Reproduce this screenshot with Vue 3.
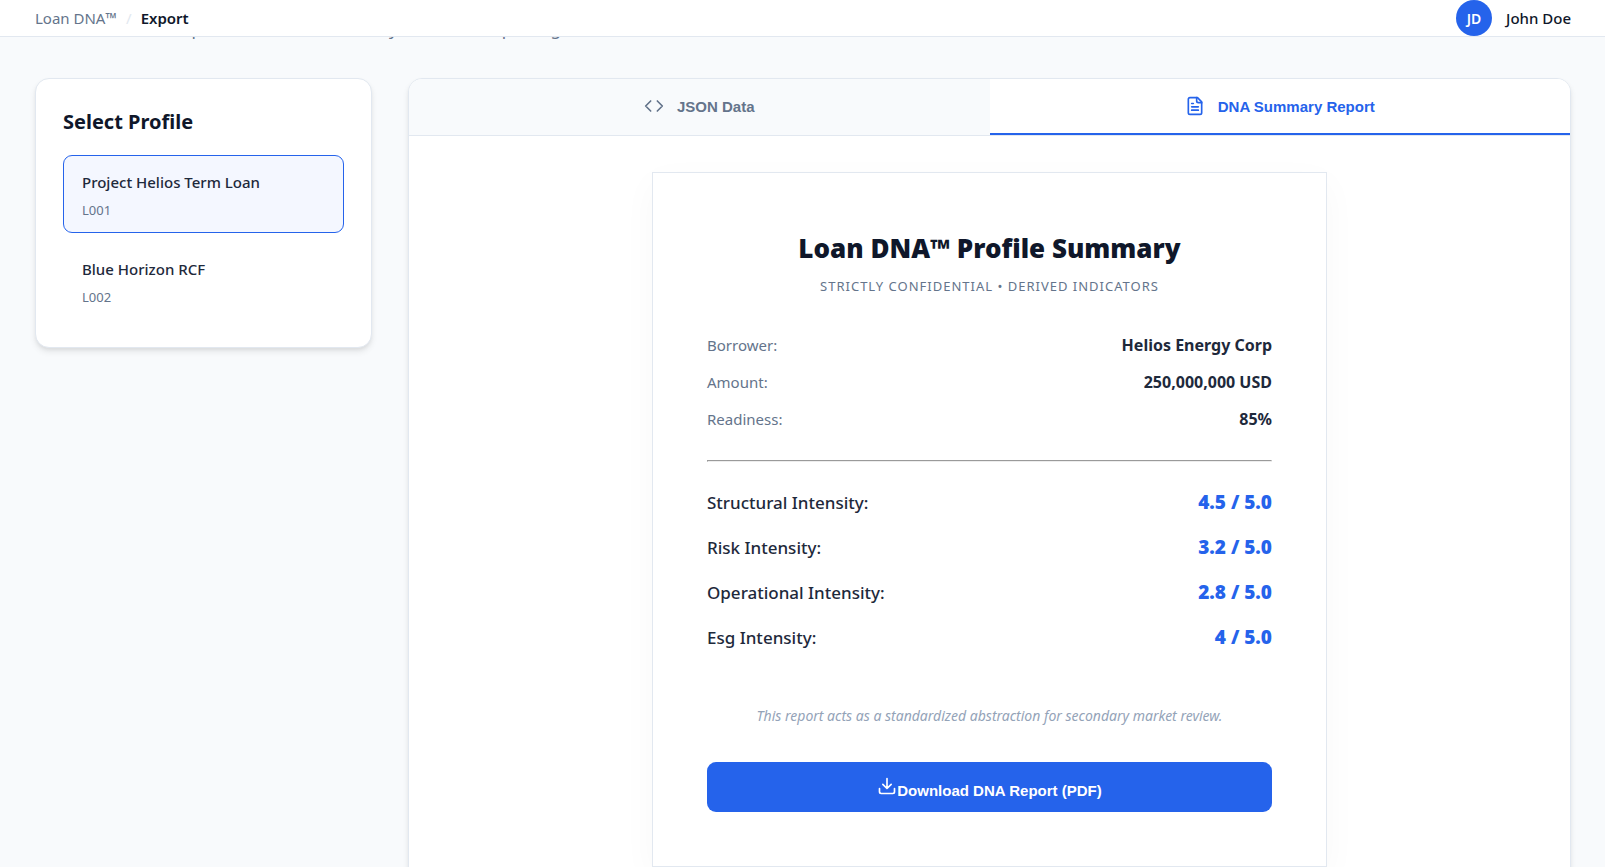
<script setup>
import { ref, computed } from 'vue'

const profiles = [
    {
        id: 'L001',
        name: 'Project Helios Term Loan',
        borrower: 'Helios Energy Corp',
        amount: '250,000,000 USD',
        readiness: 85,
        dna: { structural: '4.5', risk: '3.2', operational: '2.8', esg: '4' }
    },
    {
        id: 'L002',
        name: 'Blue Horizon RCF',
        borrower: 'Blue Horizon Ltd',
        amount: '120,000,000 EUR',
        readiness: 72,
        dna: { structural: '3.8', risk: '2.9', operational: '3.1', esg: '3.5' }
    }
]

const selectedId = ref('L001')
const activeTab = ref('report')

const selected = computed(() => profiles.find(p => p.id === selectedId.value))
const capitalize = (s) => s.charAt(0).toUpperCase() + s.slice(1)
const print = () => window.print()
</script>

<template>
    <div class="page">
        <header class="topbar">
            <nav class="breadcrumb">
                <a href="#">Loan DNA™</a>
                <span class="separator">/</span>
                <span class="current">Export</span>
            </nav>
            <div class="user">
                <span class="avatar">JD</span>
                <span class="user-name">John Doe</span>
            </div>
        </header>

        <main class="content">
            <p class="subtitle">Download the DNA profile data for secondary market or reporting.</p>

            <div class="layout">
                <aside class="card profiles">
                    <h3>Select Profile</h3>
                    <div class="profile-list">
                        <button v-for="p in profiles" :key="p.id" type="button" class="profile"
                            :class="{ active: p.id === selectedId }" @click="selectedId = p.id">
                            <span class="profile-name">{{ p.name }}</span>
                            <span class="profile-id">{{ p.id }}</span>
                        </button>
                    </div>
                </aside>

                <section class="card preview">
                    <div class="tabs">
                        <button type="button" class="tab" :class="{ active: activeTab === 'json' }"
                            @click="activeTab = 'json'">
                            <svg class="icon" viewBox="0 0 24 24">
                                <path d="M16 18l6-6-6-6M8 6l-6 6 6 6" />
                            </svg>
                            JSON Data
                        </button>
                        <button type="button" class="tab" :class="{ active: activeTab === 'report' }"
                            @click="activeTab = 'report'">
                            <svg class="icon" viewBox="0 0 24 24">
                                <path d="M15 2H6a2 2 0 0 0-2 2v16a2 2 0 0 0 2 2h12a2 2 0 0 0 2-2V7z" />
                                <path d="M14 2v4a2 2 0 0 0 2 2h4M10 9H8M16 13H8M16 17H8" />
                            </svg>
                            DNA Summary Report
                        </button>
                    </div>

                    <pre v-if="activeTab === 'json'" class="json">{{ JSON.stringify(selected, null, 2) }}</pre>

                    <div v-else class="report-area">
                        <article class="report">
                            <h2>Loan DNA™ Profile Summary</h2>
                            <p class="confidential">STRICTLY CONFIDENTIAL • DERIVED INDICATORS</p>

                            <div class="facts">
                                <div class="row">
                                    <span>Borrower:</span>
                                    <strong>{{ selected.borrower }}</strong>
                                </div>
                                <div class="row">
                                    <span>Amount:</span>
                                    <strong>{{ selected.amount }}</strong>
                                </div>
                                <div class="row">
                                    <span>Readiness:</span>
                                    <strong>{{ selected.readiness }}%</strong>
                                </div>
                            </div>

                            <hr>

                            <div class="scores">
                                <div v-for="(value, key) in selected.dna" :key="key" class="score">
                                    <span>{{ capitalize(key) }} Intensity:</span>
                                    <strong>{{ value }} / 5.0</strong>
                                </div>
                            </div>

                            <p class="note">This report acts as a standardized abstraction for secondary market review.</p>

                            <button type="button" class="download" @click="print"><svg class="icon" viewBox="0 0 24 24">
                                    <path d="M21 15v4a2 2 0 0 1-2 2H5a2 2 0 0 1-2-2v-4M7 10l5 5 5-5M12 15V3" />
                                </svg>Download DNA Report (PDF)</button>
                        </article>
                    </div>
                </section>
            </div>
        </main>
    </div>
</template>

<style>
body {
    background-color: #f8fafc;
}
</style>

<style scoped>
.page {
    min-height: 100vh;
    font-family: 'Segoe UI', 'Noto Sans', sans-serif;
    font-size: 15px;
    color: #1e293b;
}

.page * {
    box-sizing: border-box;
}

.topbar {
    position: sticky;
    top: 0;
    z-index: 10;
    display: flex;
    justify-content: space-between;
    align-items: center;
    padding: 0 34px 0 35px;
    background-color: white;
    border-bottom: 1px solid #e2e8f0;
}

.breadcrumb {
    display: flex;
    align-items: center;
    gap: 9px;
}

.breadcrumb a {
    color: #64748b;
    text-decoration: none;
}

.separator {
    color: #e2e8f0;
}

.current {
    font-weight: 600;
    color: #0f172a;
}

.user {
    display: flex;
    align-items: center;
    gap: 14px;
}

.avatar {
    display: flex;
    align-items: center;
    justify-content: center;
    width: 36px;
    height: 36px;
    border-radius: 50%;
    background-color: #2563eb;
    color: white;
    font-size: 14px;
    font-weight: 600;
}

.user-name {
    font-weight: 500;
    color: #0f172a;
}

.content {
    padding: 0 34px 36px 35px;
}

.subtitle {
    margin: -21px 0 37px;
    font-size: 17px;
    line-height: 25px;
    color: #64748b;
}

.layout {
    display: grid;
    grid-template-columns: 337px 1fr;
    gap: 36px;
    align-items: start;
}

.card {
    background-color: white;
    border: 1px solid #e2e8f0;
    border-radius: 14px;
    box-shadow: 0 4px 7px -1px rgba(0, 0, 0, 0.1), 0 2px 4px -1px rgba(0, 0, 0, 0.06);
}

.profiles {
    padding: 27px;
}

.profiles h3 {
    margin: 0 0 18px;
    font-size: 20px;
    line-height: 31px;
    font-weight: 700;
    color: #0f172a;
}

.profile-list {
    display: flex;
    flex-direction: column;
    gap: 9px;
}

.profile {
    display: flex;
    flex-direction: column;
    gap: 4px;
    padding: 14px 18px 10px;
    border: 1px solid transparent;
    border-radius: 9px;
    background: none;
    font-family: inherit;
    text-align: left;
    cursor: pointer;
}

.profile.active {
    border-color: #2563eb;
    background-color: #f4f7ff;
}

.profile-name {
    font-size: 15px;
    line-height: 25px;
    font-weight: 500;
    color: #1e293b;
}

.profile-id {
    font-size: 13px;
    line-height: 23px;
    color: #64748b;
}

.preview {
    overflow: hidden;
}

.tabs {
    display: flex;
    background-color: #f8fafc;
    border-bottom: 1px solid #e2e8f0;
}

.tab {
    flex: 1;
    display: flex;
    align-items: center;
    justify-content: center;
    gap: 13px;
    height: 56px;
    padding: 0;
    border: none;
    border-bottom: 2px solid transparent;
    background: none;
    font-family: 'Liberation Sans', Arial, sans-serif;
    font-size: 15px;
    font-weight: 700;
    color: #64748b;
    cursor: pointer;
}

.tab.active {
    background-color: white;
    border-bottom-color: #2563eb;
    color: #2563eb;
}

.icon {
    width: 20px;
    height: 20px;
    fill: none;
    stroke: currentColor;
    stroke-width: 2;
    stroke-linecap: round;
    stroke-linejoin: round;
}

.json {
    margin: 0;
    padding: 36px;
    font-family: 'Liberation Mono', monospace;
}

.report-area {
    padding: 36px;
}

.report {
    max-width: 675px;
    margin: 0 auto;
    padding: 54px;
    border: 1px solid #e2e8f0;
    background-color: white;
    box-shadow: 0 11px 34px rgba(0, 0, 0, 0.03);
}

.report h2 {
    margin: 0;
    font-size: 26px;
    line-height: 42px;
    font-weight: 900;
    color: #0f172a;
    text-align: center;
}

.confidential {
    margin: 5px 0 34px;
    font-size: 13px;
    line-height: 25px;
    letter-spacing: 1px;
    color: #64748b;
    text-align: center;
}

.facts {
    display: flex;
    flex-direction: column;
    gap: 12px;
}

.row,
.score {
    display: flex;
    justify-content: space-between;
}

.row {
    line-height: 25px;
}

.row span {
    color: #64748b;
}

.row strong {
    font-size: 16px;
    font-weight: 700;
}

hr {
    margin: 28px 0 27px;
    border: 1px solid #9a9a9a;
    border-right-color: #ededed;
    border-bottom-color: #ededed;
}

.scores {
    display: flex;
    flex-direction: column;
    gap: 18px;
}

.score {
    font-size: 17px;
    line-height: 27px;
    font-weight: 500;
}

.score strong {
    font-size: 19px;
    font-weight: 900;
    color: #2563eb;
}

.note {
    margin: 54px 0 36px;
    font-size: 14px;
    line-height: 21px;
    font-style: italic;
    color: #94a3b8;
    text-align: center;
}

.download {
    width: 100%;
    height: 50px;
    padding: 0;
    border: none;
    border-radius: 9px;
    background-color: #2563eb;
    font-family: 'Liberation Sans', Arial, sans-serif;
    font-size: 15px;
    font-weight: 700;
    color: white;
    cursor: pointer;
}
</style>
